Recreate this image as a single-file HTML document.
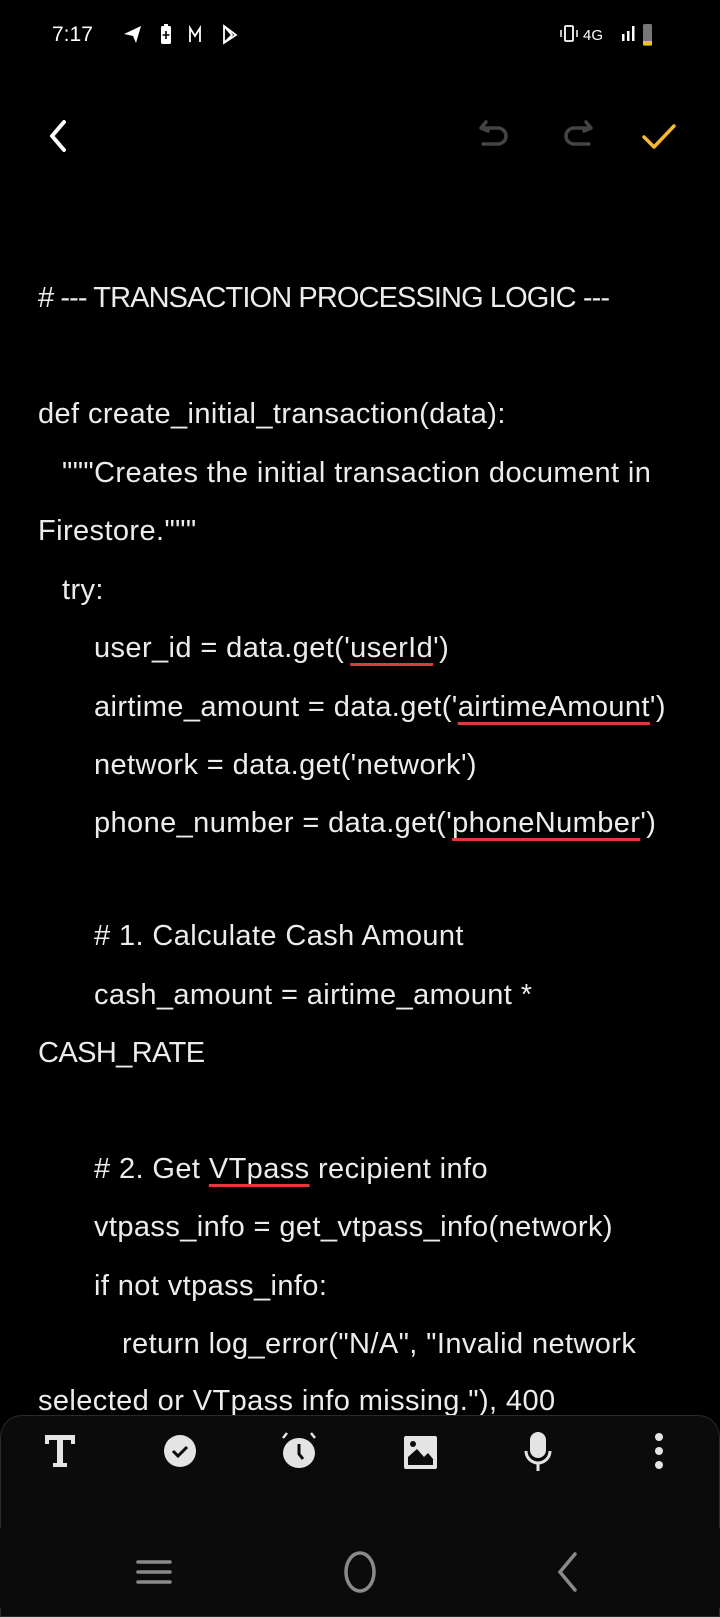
<!DOCTYPE html>
<html><head><meta charset="utf-8"><style>
html,body{margin:0;padding:0;background:#000;width:720px;height:1608px;overflow:hidden;font-family:"Liberation Sans",sans-serif;}
.abs{position:absolute}
.ln{position:absolute;left:38px;height:58px;line-height:58px;font-size:29px;color:#ececec;white-space:pre;letter-spacing:0.4px}
.i1{padding-left:24px}.i2{padding-left:56px}.i3{padding-left:84px}
.u{text-decoration:underline;text-decoration-color:#e0393e;text-decoration-thickness:3px;text-underline-offset:6px}
.sb{color:#fff;font-size:21px}
</style></head><body>
<div class="abs sb" style="left:52px;top:23px;">7:17</div>
<svg class="abs" style="left:120px;top:22px" width="130" height="26" viewBox="0 0 130 26">
 <path d="M4 12 L21 4 L16 21 L13 14 Z" fill="#fff"/>
 <rect x="41" y="4" width="10" height="18" rx="1.5" fill="#fff"/><rect x="44" y="2" width="4" height="3" fill="#fff"/>
 <path d="M46 9v8M42.5 13h7" stroke="#000" stroke-width="1.6"/>
 <path d="M70 20V6l5 8 5-8v14" stroke="#fff" stroke-width="1.8" fill="none"/>
 <path d="M104 4 L116 13 L104 21 Z M104 4 L112 13 L104 21" stroke="#fff" stroke-width="1.8" fill="none"/>
</svg>
<svg class="abs" style="left:560px;top:22px" width="110" height="30" viewBox="0 0 110 30">
 <rect x="5" y="4" width="8" height="15" rx="1" stroke="#fff" stroke-width="1.8" fill="none"/>
 <path d="M1 8v7M17 8v7" stroke="#fff" stroke-width="1.5"/>
 <text x="23" y="18" fill="#fff" font-size="15" font-family="Liberation Sans Narrow, Liberation Sans">4G</text>
 <rect x="62" y="12" width="2.5" height="7" fill="#fff"/><rect x="67" y="9" width="2.5" height="10" fill="#fff"/><rect x="72" y="4" width="2.5" height="15" fill="#fff"/>
 <rect x="83" y="2" width="9" height="22" rx="1.5" fill="#777"/><rect x="83" y="19" width="9" height="4" fill="#f2c01d"/>
</svg>
<svg class="abs" style="left:44px;top:118px" width="30" height="36" viewBox="0 0 30 36"><path d="M20 4 L8 18 L20 32" stroke="#fff" stroke-width="4" fill="none" stroke-linecap="round" stroke-linejoin="round"/></svg>
<svg class="abs" style="left:476px;top:118px" width="40" height="38" viewBox="0 0 40 38"><path d="M10 4 L5 10 L12 13 M5 10 H22 a8 8 0 0 1 0 16 H7" stroke="#444" stroke-width="3.5" fill="none" stroke-linecap="round" stroke-linejoin="round"/></svg>
<svg class="abs" style="left:556px;top:118px" width="40" height="38" viewBox="0 0 40 38"><path d="M30 4 L35 10 L28 13 M35 10 H18 a8 8 0 0 0 0 16 H33" stroke="#444" stroke-width="3.5" fill="none" stroke-linecap="round" stroke-linejoin="round"/></svg>
<svg class="abs" style="left:640px;top:120px" width="40" height="34" viewBox="0 0 40 34"><path d="M4 17 L14 27 L34 6" stroke="#f5b82e" stroke-width="3.5" fill="none" stroke-linecap="round" stroke-linejoin="round"/></svg>

<div class="ln" style="top:269px;letter-spacing:-0.9px"># --- TRANSACTION PROCESSING LOGIC ---</div>
<div class="ln" style="top:385px">def create_initial_transaction(data):</div>
<div class="ln i1" style="top:444px">"""Creates the initial transaction document in</div>
<div class="ln" style="top:502px">Firestore."""</div>
<div class="ln i1" style="top:561px">try:</div>
<div class="ln i2" style="top:619px">user_id = data.get('<span class="u">userId</span>')</div>
<div class="ln i2" style="top:678px">airtime_amount = data.get('<span class="u">airtimeAmount</span>')</div>
<div class="ln i2" style="top:736px">network = data.get('network')</div>
<div class="ln i2" style="top:794px">phone_number = data.get('<span class="u">phoneNumber</span>')</div>
<div class="ln i2" style="top:907px"># 1. Calculate Cash Amount</div>
<div class="ln i2" style="top:966px">cash_amount = airtime_amount *</div>
<div class="ln" style="top:1024px;letter-spacing:-0.6px">CASH_RATE</div>
<div class="ln i2" style="top:1140px"># 2. Get <span class="u">VTpass</span> recipient info</div>
<div class="ln i2" style="top:1198px">vtpass_info = get_vtpass_info(network)</div>
<div class="ln i2" style="top:1257px">if not vtpass_info:</div>
<div class="ln i3" style="top:1315px">return log_error("N/A", "Invalid network</div>
<div class="ln" style="top:1372px">selected or <span class="u">VTpass</span> info missing."), 400</div>

<div class="abs" style="left:0;top:1415px;width:718px;height:200px;background:#0b0b0b;border:1px solid #2a2a2a;border-radius:22px 22px 0 0"></div>
<div class="abs" style="left:0;top:1528px;width:720px;height:80px;background:#0b0b0b"></div>
<svg class="abs" style="left:0;top:1427px" width="720" height="50" viewBox="0 0 720 50">
 <g fill="#e4e4e4">
  <path d="M45 8h30v9h-4v-4h-8v23h4v4h-14v-4h4V13h-8v4h-4z"/>
  <ellipse cx="180" cy="24" rx="16" ry="16"/>
  <ellipse cx="299" cy="26" rx="16" ry="15"/>
  <rect x="404" y="9" width="33" height="33" rx="2"/>
  <rect x="530" y="5" width="16" height="26" rx="8"/>
  <circle cx="659" cy="10" r="4"/><circle cx="659" cy="24" r="4"/><circle cx="659" cy="38" r="4"/>
 </g>
 <path d="M173 24l5 5 9-9" stroke="#0b0b0b" stroke-width="3" fill="none"/>
 <path d="M299 17v10l4 5" stroke="#0b0b0b" stroke-width="3" fill="none"/>
 <path d="M283 11l4-5M315 11l-4-5" stroke="#e4e4e4" stroke-width="2.5"/>
 <path d="M408 38V30l9-8 7 8 4-4 5 6v6z" fill="#0b0b0b"/><circle cx="413" cy="17" r="3" fill="#0b0b0b"/>
 <path d="M526 24a12 12 0 0 0 24 0M538 36v8" stroke="#e4e4e4" stroke-width="3" fill="none"/>
</svg>
<svg class="abs" style="left:0;top:1547px" width="720" height="50" viewBox="0 0 720 50">
 <path d="M138 15h32M138 25h32M138 35h32" stroke="#8a8a8a" stroke-width="3.5" stroke-linecap="round"/>
 <ellipse cx="360" cy="25" rx="14" ry="19" stroke="#8a8a8a" stroke-width="3.5" fill="none"/>
 <path d="M575 7 L560 25 L575 43" stroke="#8a8a8a" stroke-width="3.5" fill="none" stroke-linecap="round"/>
</svg>
</body></html>
